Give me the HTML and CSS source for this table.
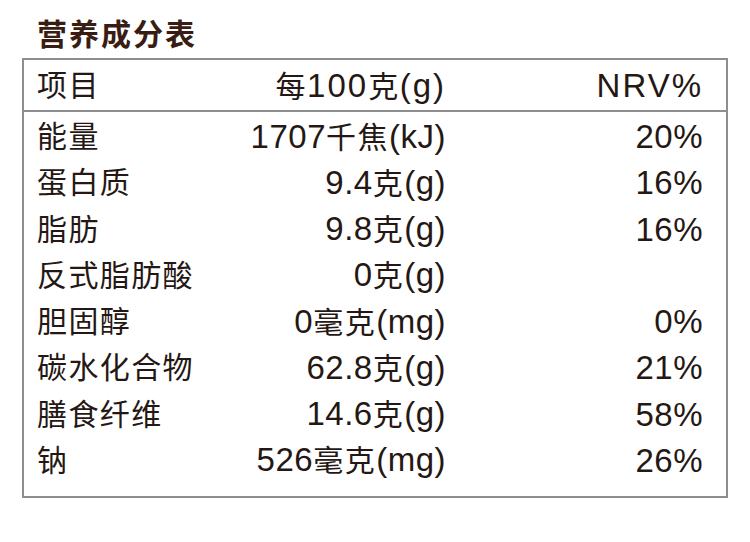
FILE: index.html
```html
<!DOCTYPE html>
<html lang="zh">
<head>
<meta charset="utf-8">
<link rel="stylesheet" href="styles.css">
</head>
<body>
<h1 class="title">营养成分表</h1>
<div class="table">
  <div class="row head">
    <div class="c1">项目</div>
    <div class="c2"><span class="zh">每</span>100<span class="zh">克</span>(g)</div>
    <div class="c3">NRV%</div>
  </div>
  <div class="body">
    <div class="row"><div class="c1">能量</div><div class="c2">1707<span class="zh">千焦</span>(kJ)</div><div class="c3">20%</div></div>
    <div class="row"><div class="c1">蛋白质</div><div class="c2">9.4<span class="zh">克</span>(g)</div><div class="c3">16%</div></div>
    <div class="row"><div class="c1">脂肪</div><div class="c2">9.8<span class="zh">克</span>(g)</div><div class="c3">16%</div></div>
    <div class="row"><div class="c1">反式脂肪酸</div><div class="c2">0<span class="zh">克</span>(g)</div><div class="c3"></div></div>
    <div class="row"><div class="c1">胆固醇</div><div class="c2">0<span class="zh">毫克</span>(mg)</div><div class="c3">0%</div></div>
    <div class="row"><div class="c1">碳水化合物</div><div class="c2">62.8<span class="zh">克</span>(g)</div><div class="c3">21%</div></div>
    <div class="row"><div class="c1">膳食纤维</div><div class="c2">14.6<span class="zh">克</span>(g)</div><div class="c3">58%</div></div>
    <div class="row"><div class="c1">钠</div><div class="c2">526<span class="zh">毫克</span>(mg)</div><div class="c3">26%</div></div>
  </div>
</div>
</body>
</html>
```

FILE: styles.css
```css
html, body {
  margin: 0;
  padding: 0;
  background: #ffffff;
}
body {
  width: 750px;
  height: 542px;
  font-family: "Liberation Sans", "Noto Sans CJK SC", sans-serif;
  color: #251814;
}
.title {
  margin: 0;
  padding: 15px 0 0 37px;
  height: 58px;
  box-sizing: border-box;
  font-size: 30px;
  line-height: 34px;
  font-weight: 700;
  letter-spacing: 2px;
  color: #3a1d12;
  font-family: "Noto Sans CJK SC", sans-serif;
}
.table {
  margin-left: 22px;
  width: 706px;
  height: 440px;
  box-sizing: border-box;
  border: 2px solid #8e8e8e;
}
.row {
  display: grid;
  grid-template-columns: 200px 209px 257px;
  padding: 0 22px 0 13px;
  height: 46.25px;
  align-items: center;
  font-size: 33px;
  line-height: 36px;
  letter-spacing: 0.5px;
}
.row.head {
  height: 52px;
  border-bottom: 2px solid #8e8e8e;
  padding-top: 2px;
  box-sizing: border-box;
  letter-spacing: 2px;
}
.body {
  padding-top: 2px;
}
.c1 {
  font-size: 30px;
  letter-spacing: 1.4px;
}
.zh {
  font-size: 30px;
  letter-spacing: 1.5px;
}
.c2, .c3 {
  text-align: right;
}
```
